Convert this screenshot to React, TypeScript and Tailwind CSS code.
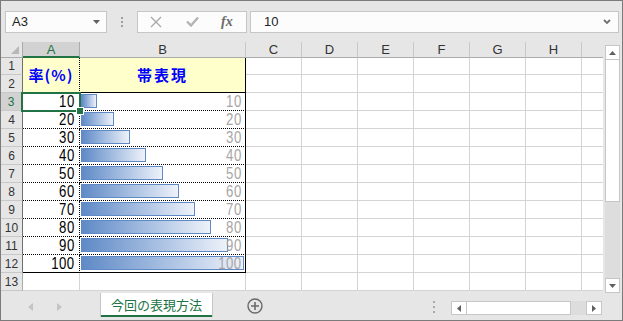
import React from 'react';

const NUM = "font-['Noto_Sans_CJK_JP','Liberation_Sans',sans-serif]";
const UI = "font-['Liberation_Sans','Noto_Sans_CJK_JP',sans-serif]";

const OTHER = ['C', 'D', 'E', 'F', 'G', 'H'];
const DATA = [10, 20, 30, 40, 50, 60, 70, 80, 90, 100];

function RowHead({ n, h, sel, edge }: { n: number; h: string; sel?: boolean; edge?: boolean }) {
  const base = `w-[22px] shrink-0 flex items-center justify-center text-[12px] ${UI} border-b border-b-[#c8c8c8] ${h}`;
  if (sel) {
    return <div className={`${base} bg-[#d2d2d2] text-[#217346] border-r-2 border-r-[#217346]`}>{n}</div>;
  }
  return (
    <div className={`${base} bg-[#e6e6e6] text-[#333333] border-r ${edge ? 'border-r-[#6f6f6f]' : 'border-r-[#ababab]'}`}>
      {n}
    </div>
  );
}

function Others({ h }: { h: string }) {
  return (
    <>
      {OTHER.map((k) => (
        <div key={k} className={`w-[56px] shrink-0 bg-white border-r border-b border-[#d4d4d4] ${h}`} />
      ))}
      <div className={`flex-1 bg-white border-b border-[#d4d4d4] ${h}`} />
    </>
  );
}

function Num({ v, gray }: { v: number; gray?: boolean }) {
  return (
    <span
      className={`relative inline-block origin-bottom-right scale-x-[0.88] scale-y-[1.15] text-[15px] leading-none tracking-[0.5px] font-['Liberation_Sans',sans-serif] ${
        gray ? 'text-[#a6a6a6]' : 'text-black'
      }`}
    >
      {v}
    </span>
  );
}

export default function App() {
  return (
    <div className="w-[623px] h-[321px] border border-[#7b7b7b] bg-[#e6e6e6] flex flex-col overflow-hidden select-none">
      {/* Formula bar */}
      <div className="h-[41px] shrink-0 flex items-center pl-[4px]">
        <div className="w-[102px] h-[22px] border border-[#c6c6c6] bg-[#fcfcfc] flex items-center justify-between pl-[6px] pr-[6px]">
          <span className={`text-[13px] text-[#222222] ${UI}`}>A3</span>
          <svg width="7" height="4" viewBox="0 0 7 4">
            <path d="M0 0h7L3.5 4z" fill="#5f5f5f" />
          </svg>
        </div>
        <div className="ml-[14px] flex flex-col gap-[2px]">
          <div className="w-[2px] h-[2px] bg-[#a0a0a0]" />
          <div className="w-[2px] h-[2px] bg-[#a0a0a0]" />
          <div className="w-[2px] h-[2px] bg-[#a0a0a0]" />
        </div>
        <div className="ml-[14px] w-[110px] h-[22px] border border-[#c6c6c6] bg-[#fcfcfc] flex items-center pl-[12px]">
          <svg width="12" height="12" viewBox="0 0 12 12">
            <path d="M1 1l10 10M11 1L1 11" stroke="#aaaaaa" strokeWidth="1.4" />
          </svg>
          <svg className="ml-[24px]" width="13" height="11" viewBox="0 0 13 11">
            <path d="M1 5.5l4 4 7-8" stroke="#b4b4b4" strokeWidth="2.4" fill="none" />
          </svg>
          <span className="ml-[22px] text-[14px] leading-none italic font-bold text-[#6a6a6a] font-['Liberation_Serif',serif]">
            fx
          </span>
        </div>
        <div className="ml-[3px] mr-[3px] flex-1 h-[22px] border border-[#c6c6c6] bg-[#fcfcfc] flex items-center justify-between pl-[13px] pr-[7px]">
          <span className={`text-[13px] text-[#222222] ${UI}`}>10</span>
          <svg width="8" height="5" viewBox="0 0 8 5">
            <path d="M1 1l3 3 3-3" stroke="#707070" strokeWidth="1.8" fill="none" />
          </svg>
        </div>
      </div>

      {/* Main area */}
      <div className="h-[251px] shrink-0 flex">
        <div className="w-[602px] shrink-0 relative flex flex-col">
          {/* column headers */}
          <div className={`flex h-[16px] text-[13px] ${UI}`}>
            <div className="w-[22px] shrink-0 bg-[#e6e6e6] border-r border-b border-[#ababab] flex items-end justify-end pr-[3px] pb-[3px]">
              <svg width="8" height="8" viewBox="0 0 8 8">
                <path d="M8 0v8H0z" fill="#b8b8b8" />
              </svg>
            </div>
            <div className="w-[57px] shrink-0 bg-[#d2d2d2] border-r border-r-[#ababab] border-b-2 border-b-[#217346] flex items-center justify-center text-[#217346] leading-none">
              A
            </div>
            <div className="w-[166px] shrink-0 bg-[#e6e6e6] border-r border-b border-r-[#c8c8c8] border-b-[#ababab] flex items-center justify-center text-[#333333] leading-none">
              B
            </div>
            {OTHER.map((k) => (
              <div
                key={k}
                className="w-[56px] shrink-0 bg-[#e6e6e6] border-r border-b border-r-[#c8c8c8] border-b-[#ababab] flex items-center justify-center text-[#333333] leading-none"
              >
                {k}
              </div>
            ))}
            <div className="flex-1 bg-[#e6e6e6] border-b border-[#ababab]" />
          </div>

          {/* rows 1-2 (merged header) */}
          <div className="flex h-[35px]">
            <div className="w-[22px] shrink-0 flex flex-col">
              <RowHead n={1} h="h-[17px]" edge />
              <RowHead n={2} h="h-[18px]" edge />
            </div>
            <div
              className={`w-[57px] shrink-0 h-[35px] bg-[#ffffcc] border-r border-b border-black [border-right-style:dotted] flex items-center justify-center text-[15px] font-bold text-[#0000ff] tracking-[1px] ${NUM}`}
            >
              率(%)
            </div>
            <div
              className={`w-[166px] shrink-0 h-[35px] bg-[#ffffcc] border-r border-b border-black flex items-center justify-center text-[15px] font-bold text-[#0000ff] tracking-[2px] ${NUM}`}
            >
              帯表現
            </div>
            {OTHER.map((k) => (
              <div key={k} className="w-[56px] shrink-0 flex flex-col">
                <div className="h-[17px] bg-white border-r border-b border-[#d4d4d4]" />
                <div className="h-[18px] bg-white border-r border-b border-[#d4d4d4]" />
              </div>
            ))}
            <div className="flex-1 flex flex-col">
              <div className="h-[17px] bg-white border-b border-[#d4d4d4]" />
              <div className="h-[18px] bg-white border-b border-[#d4d4d4]" />
            </div>
          </div>

          {/* data rows 3-12 */}
          {DATA.map((v, i) => {
            const last = i === DATA.length - 1;
            return (
              <div key={v} className="flex h-[18px]">
                <RowHead n={i + 3} h="h-[18px]" sel={i === 0} edge />
                <div
                  className={`w-[57px] shrink-0 h-[18px] bg-white border-r border-b border-black flex items-end justify-end pr-[4px] pb-[1px] ${
                    last ? '[border-right-style:dotted]' : 'border-dotted'
                  }`}
                >
                  <Num v={v} />
                </div>
                <div
                  className={`w-[166px] shrink-0 h-[18px] relative bg-white border-r border-b border-black flex items-end justify-end pr-[3px] pb-[1px] ${
                    last ? '' : '[border-bottom-style:dotted]'
                  }`}
                >
                  <div
                    className="absolute left-[1px] top-[1px] h-[14px] border border-[#5f8ac6] bg-linear-to-r from-[#5f8ac6] to-[#eef2f9]"
                    style={{ width: `${Math.round(v * 1.63)}px` }}
                  />
                  <Num v={v} gray />
                </div>
                <Others h="h-[18px]" />
              </div>
            );
          })}

          {/* row 13 */}
          <div className="flex h-[18px]">
            <RowHead n={13} h="h-[18px]" />
            <div className="w-[57px] shrink-0 h-[18px] bg-white border-r border-b border-[#d4d4d4]" />
            <div className="w-[166px] shrink-0 h-[18px] bg-white border-r border-b border-[#d4d4d4]" />
            <Others h="h-[18px]" />
          </div>

          {/* selection overlay on A3 */}
          <div className="absolute left-[20px] top-[50px] w-[60px] h-[20px] border-2 border-[#217346] pointer-events-none">
            <div className="absolute right-[-4px] bottom-[-4px] w-[6px] h-[6px] bg-[#217346] outline outline-1 outline-white" />
          </div>
        </div>

        {/* vertical scrollbar */}
        <div className="w-[18px] shrink-0 flex flex-col pt-[3px] pl-[2px]">
          <div className="w-[15px] h-[15px] bg-white border border-[#c6c6c6] flex items-center justify-center">
            <svg width="7" height="4" viewBox="0 0 7 4">
              <path d="M0 4h7L3.5 0z" fill="#606060" />
            </svg>
          </div>
          <div className="w-[15px] h-[142px] bg-white border-x border-b border-[#c6c6c6]" />
          <div className="w-[15px] h-[76px] bg-[#dddddd]" />
          <div className="w-[15px] h-[15px] bg-white border border-[#c6c6c6] flex items-center justify-center">
            <svg width="7" height="4" viewBox="0 0 7 4">
              <path d="M0 0h7L3.5 4z" fill="#606060" />
            </svg>
          </div>
        </div>
      </div>

      {/* sheet tabs */}
      <div className="h-[27px] shrink-0 flex items-start">
        <div className="w-[99px] h-full shrink-0 flex items-center">
          <svg className="ml-[27px]" width="5" height="8" viewBox="0 0 5 8">
            <path d="M5 0v8L0 4z" fill="#c4c4c4" />
          </svg>
          <svg className="ml-[24px]" width="5" height="8" viewBox="0 0 5 8">
            <path d="M0 0v8l5-4z" fill="#c4c4c4" />
          </svg>
        </div>
        <div className="w-[113px] h-[24px] shrink-0 bg-white border-x border-[#c6c6c6] flex flex-col">
          <div className="flex-1 flex items-center justify-center text-[13px] text-[#217346] font-['Noto_Sans_CJK_JP',sans-serif] leading-none">
            今回の表現方法
          </div>
          <div className="h-[2px] bg-[#217346]" />
        </div>
        <svg className="ml-[34px] mt-[5px]" width="16" height="16" viewBox="0 0 16 16">
          <circle cx="8" cy="8" r="7" stroke="#6a6a6a" strokeWidth="1.4" fill="none" />
          <path d="M8 4v8M4 8h8" stroke="#6a6a6a" strokeWidth="1.6" />
        </svg>
        <div className="flex-1" />
        <div className="mt-[8px] flex flex-col gap-[3px]">
          <div className="w-[2px] h-[2px] bg-[#a8a8a8]" />
          <div className="w-[2px] h-[2px] bg-[#a8a8a8]" />
          <div className="w-[2px] h-[2px] bg-[#a8a8a8]" />
        </div>
        <div className="ml-[16px] mr-[20px] mt-[8px] h-[14px] flex">
          <div className="w-[16px] h-[14px] bg-white border border-[#c6c6c6] flex items-center justify-center">
            <svg width="4" height="7" viewBox="0 0 4 7">
              <path d="M4 0v7L0 3.5z" fill="#606060" />
            </svg>
          </div>
          <div className="w-[104px] h-[14px] bg-white border-y border-r border-[#c6c6c6]" />
          <div className="w-[15px] h-[14px] bg-[#dddddd]" />
          <div className="w-[16px] h-[14px] bg-white border border-[#c6c6c6] flex items-center justify-center">
            <svg width="4" height="7" viewBox="0 0 4 7">
              <path d="M0 0v7l4-3.5z" fill="#606060" />
            </svg>
          </div>
        </div>
      </div>
    </div>
  );
}
